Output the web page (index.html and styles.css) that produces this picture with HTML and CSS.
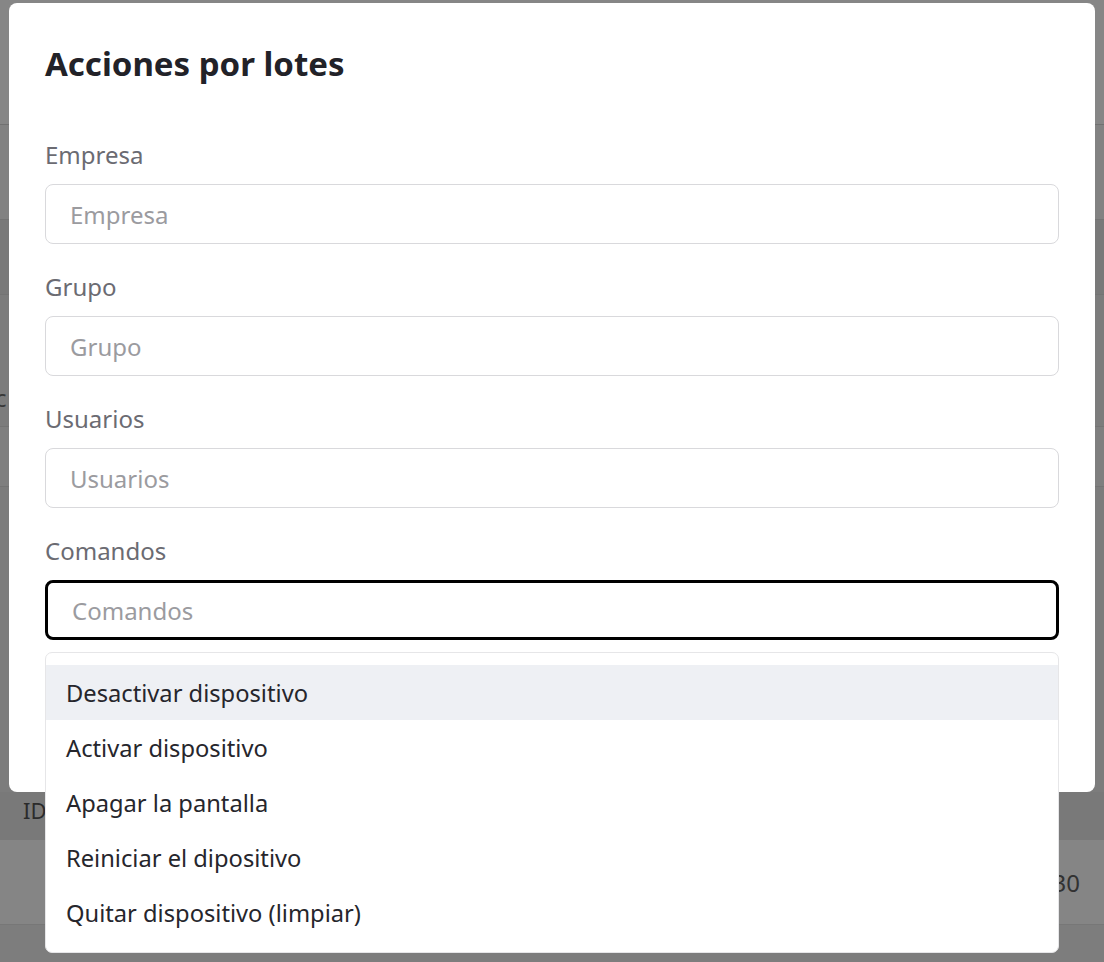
FILE: index.html
```html
<!DOCTYPE html>
<html lang="es">
<head>
<meta charset="utf-8">
<title>Acciones por lotes</title>
<link rel="stylesheet" href="styles.css">
</head>
<body>
<div class="page">
  <div class="bg-header"></div>
  <div class="bg-row bg-r1"></div>
  <div class="bg-row bg-r2"></div>
  <div class="bg-row bg-r3"><span class="bg-c">c</span></div>
  <div class="bg-row bg-r4"></div>
  <div class="bg-gap"></div>
  <div class="bg-thead"><span>ID</span></div>
  <div class="bg-trow"><span>30</span></div>
  <div class="bg-tail"></div>
</div>

<div class="backdrop"></div>

<div class="modal">
  <h2 class="modal-title">Acciones por lotes</h2>
  <div class="field">
    <label class="field-label">Empresa</label>
    <div class="input">Empresa</div>
  </div>
  <div class="field">
    <label class="field-label">Grupo</label>
    <div class="input">Grupo</div>
  </div>
  <div class="field">
    <label class="field-label">Usuarios</label>
    <div class="input">Usuarios</div>
  </div>
  <div class="field field-last">
    <label class="field-label">Comandos</label>
    <div class="input input-focus">Comandos</div>
    <ul class="menu">
      <li class="menu-item active">Desactivar dispositivo</li>
      <li class="menu-item">Activar dispositivo</li>
      <li class="menu-item">Apagar la pantalla</li>
      <li class="menu-item">Reiniciar el dipositivo</li>
      <li class="menu-item">Quitar dispositivo (limpiar)</li>
    </ul>
  </div>
</div>
</body>
</html>
```

FILE: styles.css
```css
* { box-sizing: border-box; }
html, body { margin: 0; padding: 0; }
body {
  font-family: "Noto Sans", "Open Sans", sans-serif;
  background: #7f7f7f;
  width: 1104px;
  height: 962px;
  overflow: hidden;
  position: relative;
}
.page {
  display: flex;
  flex-direction: column;
  height: 962px;
}
.bg-header { height: 125px; background: #898989; border-bottom: 1px solid #747474; }
.bg-row { height: 95px; background: #7f7f7f; border-bottom: 1px solid #777; position: relative; }
.bg-r1 { height: 95px; background: #858585; }
.bg-r2 { height: 75px; background: #7c7c7c; }
.bg-r3 { height: 132px; background: #7f7f7f; }
.bg-r4 { height: 60px; background: #828282; }
.bg-c { position: absolute; left: -5px; top: 86px; font-size: 24px; color: #3a3a3a; }
.bg-gap { height: 305px; background: #7f7f7f; }
.bg-thead { height: 48px; background: #7c7c7c; padding-left: 23px; padding-top: 3px; display: flex; align-items: flex-start; }
.bg-thead span { font-size: 22px; color: #2c2c2c; line-height: 30px; }
.bg-trow { height: 85px; background: #888; border-bottom: 1px solid #7a7a7a; display: flex; justify-content: flex-end; align-items: center; }
.bg-trow span { font-size: 24px; color: #333; padding-right: 24px; }
.bg-tail { flex: 1; background: #808080; }

.backdrop { position: absolute; inset: 0; background: rgba(0,0,0,0.02); }

.modal {
  position: absolute;
  left: 9px;
  top: 3px;
  width: 1086px;
  height: 789px;
  background: #fff;
  border-radius: 8px;
  padding: 39px 36px 0 36px;
  color: #222228;
}
.modal-title {
  margin: 0 0 54px 0;
  font-size: 33px;
  line-height: 44px;
  font-weight: 700;
  color: #222228;
}
.field { display: flex; flex-direction: column; margin-bottom: 28px; position: relative; }
.field-label {
  font-size: 24px;
  line-height: 30px;
  color: #6b6b72;
  margin-bottom: 14px;
}
.input {
  height: 60px;
  border: 1px solid #d9d9dc;
  border-radius: 8px;
  padding: 0 24px;
  display: flex;
  align-items: center;
  font-size: 24px;
  color: #9b9b9f;
}
.input-focus {
  border: 3px solid #000;
  padding-left: 24px;
}
.menu {
  position: absolute;
  left: 0;
  right: 0;
  top: 116px;
  margin: 0;
  padding: 12px 0;
  list-style: none;
  background: #fff;
  border: 1px solid #e6e6e8;
  border-radius: 7px;
  z-index: 2;
}
.menu-item {
  height: 55px;
  display: flex;
  align-items: center;
  padding-left: 20px;
  font-size: 23.7px;
  color: #26262c;
}
.menu-item.active { background: #eef0f4; }
```
